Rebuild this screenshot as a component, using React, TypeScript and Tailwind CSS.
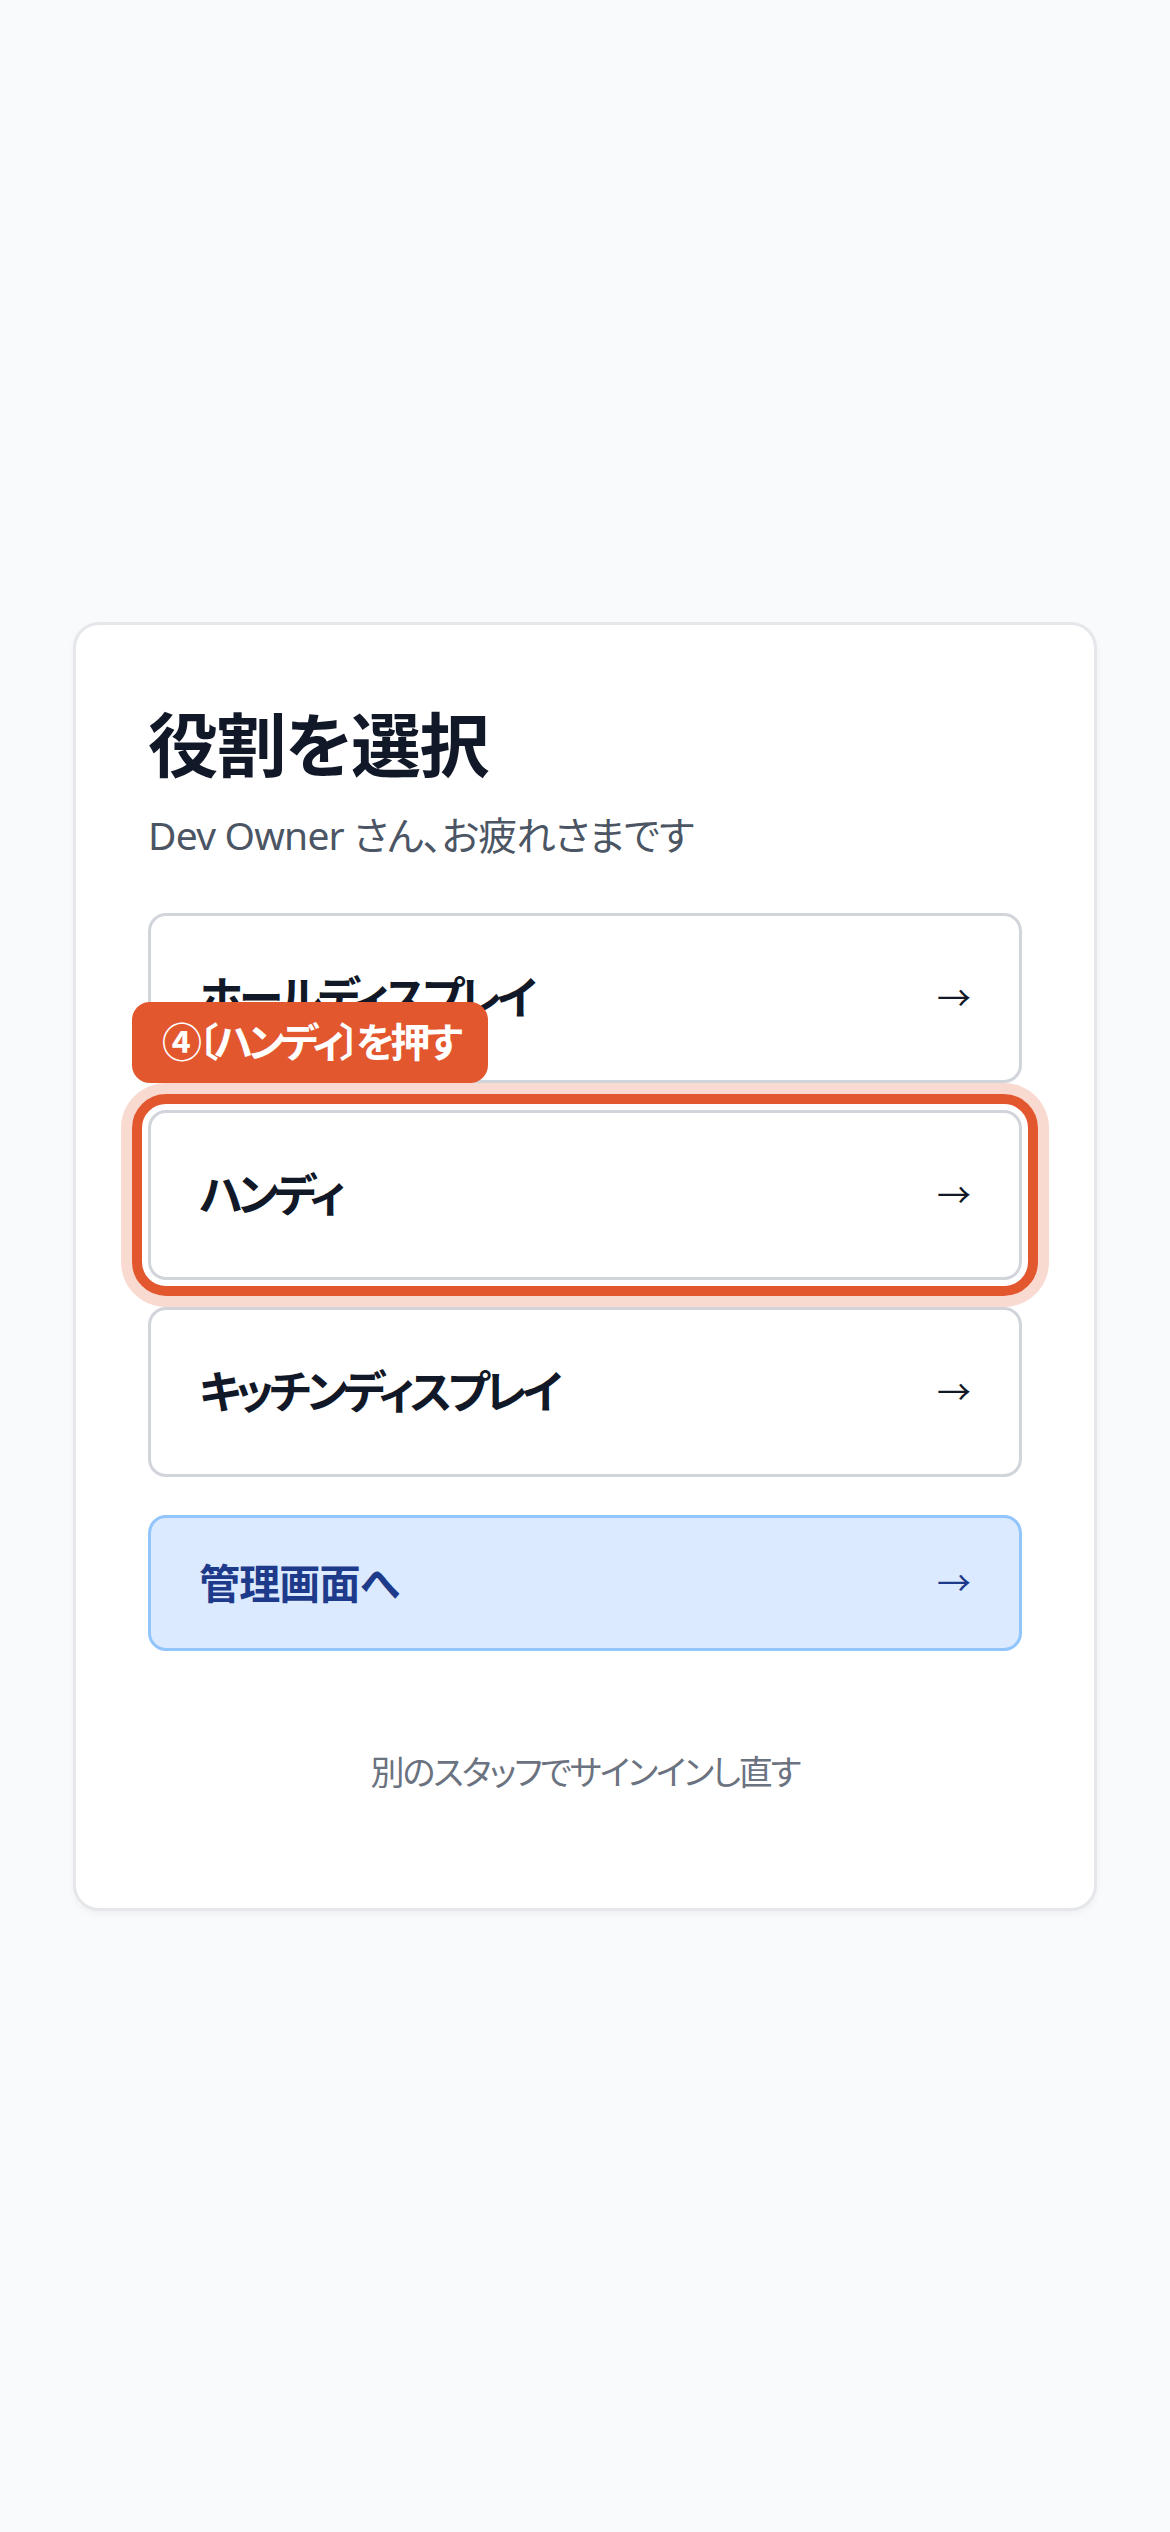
import React from "react";

interface Role {
  label: string;
  highlighted?: boolean;
}

const roles: Role[] = [
  { label: "ホールディスプレイ" },
  { label: "ハンディ", highlighted: true },
  { label: "キッチンディスプレイ" },
];

function RoleButton({ role }: { role: Role }) {
  return (
    <div className="relative">
      {role.highlighted && (
        <>
          <div className="pointer-events-none absolute -inset-[16px] rounded-[34px] border-[10px] border-[#e3572f] shadow-[0_0_0_11px_rgba(227,87,47,0.22)]" />
          <div className="absolute left-[-16px] bottom-[calc(100%+27px)] z-10 flex h-[81px] items-center whitespace-nowrap rounded-[18px] bg-[#e3572f] px-[30px] text-[40px] font-bold leading-[60px] tracking-[-0.1em] text-white">
            ④〔ハンディ〕を押す
          </div>
        </>
      )}
      <button className="flex w-full items-center justify-between rounded-[18px] border-[3px] border-[#d1d5db] bg-white px-[48px] py-[46px] text-left">
        <span className="text-[45px] font-semibold leading-[72px] tracking-[-0.1em] text-[#111827]">{role.label}</span>
        <span className="text-[34px] leading-[72px] text-[#111827]">→</span>
      </button>
    </div>
  );
}

export default function App() {
  return (
    <div className="flex min-h-[2532px] items-center justify-center bg-[#f9fafb] px-[73px] font-['Noto_Sans','Noto_Sans_CJK_JP',sans-serif] [font-feature-settings:'palt']">
      <div className="w-full rounded-[26px] border-[3px] border-[#e5e7eb] bg-white px-[72px] pt-[72px] pb-[76px] shadow-[0_3px_6px_rgba(0,0,0,0.04)]">
        <h1 className="text-[70px] font-bold leading-[96px] tracking-[-0.02em] text-[#111827]">役割を選択</h1>
        <p className="mt-[12px] text-[39px] leading-[60px] tracking-[-0.02em] text-[#4b5563]">Dev Owner さん、お疲れさまです</p>

        <div className="mt-[48px] flex flex-col gap-[27px]">
          {roles.map((role) => (
            <RoleButton key={role.label} role={role} />
          ))}
        </div>

        <button className="mt-[38px] flex w-full items-center justify-between rounded-[18px] border-[3px] border-[#93c5fd] bg-[#dbeafe] px-[48px] py-[35px] text-left">
          <span className="text-[41px] font-bold leading-[60px] tracking-[-0.02em] text-[#1e3a8a]">管理画面へ</span>
          <span className="text-[34px] leading-[60px] text-[#1e3a8a]">→</span>
        </button>

        <button className="mt-[61px] w-full py-[36px] text-center text-[34px] leading-[48px] tracking-[-0.06em] text-[#6b7280]">
          別のスタッフでサインインし直す
        </button>
      </div>
    </div>
  );
}
